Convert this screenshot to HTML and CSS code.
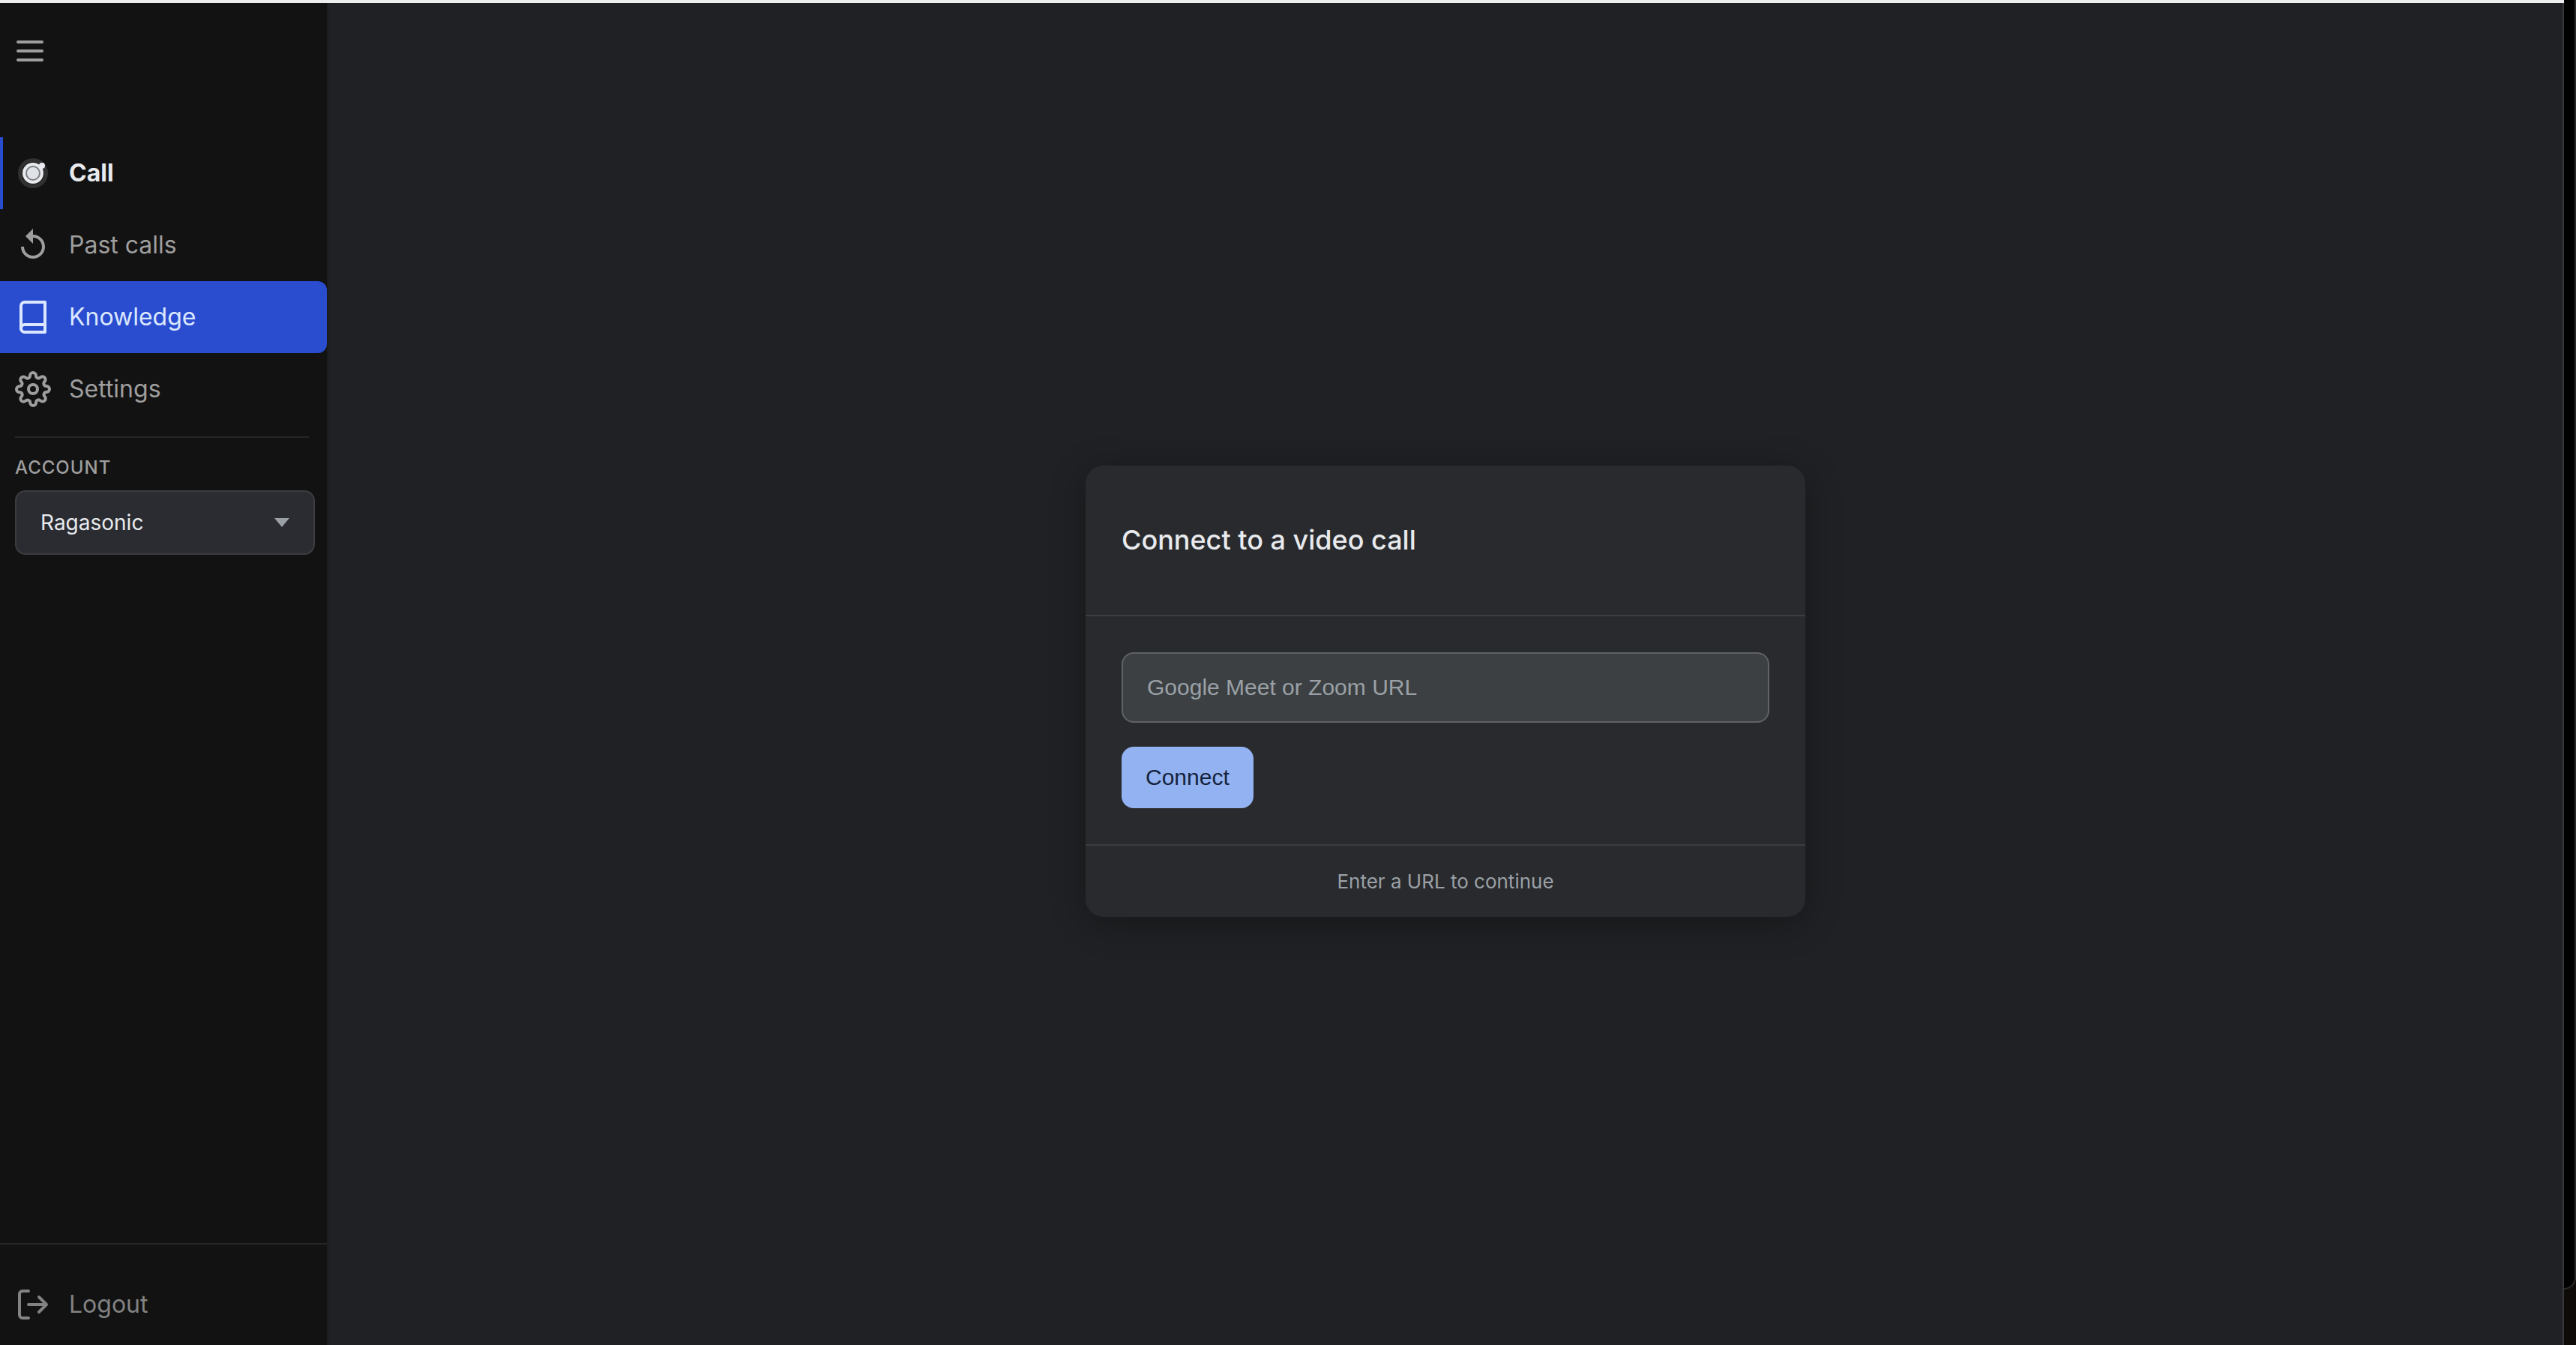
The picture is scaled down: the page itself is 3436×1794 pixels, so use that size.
FILE: index.html
```html
<!DOCTYPE html>
<html lang="en">
<head>
<meta charset="utf-8">
<title>Connect to a video call</title>
<link rel="stylesheet" href="styles.css">
</head>
<body>
<div class="app">
  <aside class="sidebar">
    <button class="menu-button" type="button" aria-label="Toggle menu">
      <svg class="icon" viewBox="0 0 24 24"><path d="M4 6h16M4 12h16M4 18h16"/></svg>
    </button>
    <nav class="nav">
      <a class="nav-item nav-item-current" href="#call">
        <svg class="icon-solid" viewBox="0 0 48 48">
          <circle cx="24" cy="24" r="20" fill="#313131"/>
          <circle cx="24" cy="24" r="15" fill="#1a1a1a"/>
          <circle cx="24" cy="24" r="14" fill="#e8eaed"/>
          <circle cx="36" cy="14" r="4" fill="#e8eaed"/>
          <circle cx="24" cy="24" r="9" fill="#dfe2e7" stroke="#7c7f84" stroke-width="2"/>
        </svg>
        Call
      </a>
      <a class="nav-item" href="#past-calls">
        <svg class="icon-solid" viewBox="0 0 24 24"><path fill="currentColor" d="M12 5V1L7 6l5 5V7c3.31 0 6 2.69 6 6s-2.69 6-6 6-6-2.69-6-6H4c0 4.42 3.58 8 8 8s8-3.58 8-8-3.58-8-8-8z"/></svg>
        Past calls
      </a>
      <a class="nav-item nav-item-active" href="#knowledge">
        <svg class="icon" viewBox="0 0 24 24"><path d="M4 19.5A2.5 2.5 0 0 1 6.5 17H20"/><path d="M6.5 2H20v20H6.5A2.5 2.5 0 0 1 4 19.5v-15A2.5 2.5 0 0 1 6.5 2z"/></svg>
        Knowledge
      </a>
      <a class="nav-item" href="#settings">
        <svg class="icon" viewBox="0 0 24 24"><circle cx="12" cy="12" r="3"/><path d="M19.4 15a1.65 1.65 0 0 0 .33 1.82l.06.06a2 2 0 0 1 0 2.83 2 2 0 0 1-2.83 0l-.06-.06a1.65 1.65 0 0 0-1.82-.33 1.65 1.65 0 0 0-1 1.51V21a2 2 0 0 1-2 2 2 2 0 0 1-2-2v-.09A1.65 1.65 0 0 0 9 19.4a1.65 1.65 0 0 0-1.82.33l-.06.06a2 2 0 0 1-2.83 0 2 2 0 0 1 0-2.83l.06-.06a1.65 1.65 0 0 0 .33-1.82 1.65 1.65 0 0 0-1.51-1H3a2 2 0 0 1-2-2 2 2 0 0 1 2-2h.09A1.65 1.65 0 0 0 4.6 9a1.65 1.65 0 0 0-.33-1.82l-.06-.06a2 2 0 0 1 0-2.83 2 2 0 0 1 2.83 0l.06.06a1.65 1.65 0 0 0 1.82.33H9a1.65 1.65 0 0 0 1-1.51V3a2 2 0 0 1 2-2 2 2 0 0 1 2 2v.09a1.65 1.65 0 0 0 1 1.51 1.65 1.65 0 0 0 1.82-.33l.06-.06a2 2 0 0 1 2.83 0 2 2 0 0 1 0 2.83l-.06.06a1.65 1.65 0 0 0-.33 1.82V9a1.65 1.65 0 0 0 1.51 1H21a2 2 0 0 1 2 2 2 2 0 0 1-2 2h-.09a1.65 1.65 0 0 0-1.51 1z"/></svg>
        Settings
      </a>
    </nav>
    <div class="account">
      <label class="account-label" for="account">ACCOUNT</label>
      <div class="select-wrap">
        <select class="account-select" id="account"><option>Ragasonic</option></select>
      </div>
    </div>
    <div class="sidebar-footer">
      <a class="nav-item nav-item-muted" href="#logout">
        <svg class="icon" viewBox="0 0 24 24"><path d="M9 21H5a2 2 0 0 1-2-2V5a2 2 0 0 1 2-2h4M16 17l5-5-5-5M21 12H9"/></svg>
        Logout
      </a>
    </div>
  </aside>
  <main class="main">
    <form class="card">
      <header class="card-header"><h1 class="card-title">Connect to a video call</h1></header>
      <div class="card-body">
        <input class="url-input" type="url" aria-label="Meeting URL" placeholder="Google Meet or Zoom URL">
        <button class="connect-button" type="button">Connect</button>
      </div>
      <footer class="card-footer">Enter a URL to continue</footer>
    </form>
  </main>
  <div class="window-edge"><div class="window-corner"></div></div>
</div>
</body>
</html>
```

FILE: styles.css
```css
* {
  box-sizing: border-box;
}

body {
  margin: 0;
  background: #202124;
  font-family: Inter, "Liberation Sans", sans-serif;
}

.app {
  display: flex;
  min-height: 100vh;
}

.sidebar {
  display: flex;
  flex-direction: column;
  flex: 0 0 438px;
  padding-right: 2px;
  border-top: 4px solid #ededed;
  background: #121212;
  box-shadow: inset -2px 0 #1b1c1e;
}

.icon,
.icon-solid {
  flex: none;
  width: 48px;
  height: 48px;
}

.icon {
  fill: none;
  stroke: currentColor;
  stroke-width: 2;
  stroke-linecap: round;
  stroke-linejoin: round;
}

.menu-button {
  display: flex;
  align-self: flex-start;
  margin: 40px 16px 91px;
  padding: 0;
  border: 0;
  background: none;
  color: #9e9e9e;
}

.nav-item {
  display: flex;
  align-items: center;
  gap: 24px;
  height: 96px;
  padding-left: 20px;
  color: #9e9e9e;
  font-size: 32px;
  line-height: 48px;
  text-decoration: none;
}

.nav-item-current {
  box-shadow: inset 4px 0 #2a4dd0;
  color: #e8eaed;
  font-weight: 700;
}

.nav-item-active {
  border-radius: 0 12px 12px 0;
  background: #2a4dd0;
  color: #dbe7ff;
}

.nav-item-muted {
  color: #828282;
}

.account {
  display: flex;
  flex-direction: column;
  margin: 15px 16px 0 20px;
}

.account::before {
  content: "";
  height: 2px;
  margin: 0 8px 24px 0;
  background: #262626;
}

.account-label {
  margin-bottom: 14px;
  color: #9e9e9e;
  font-size: 24px;
  font-weight: 500;
  line-height: 32px;
  letter-spacing: 1px;
}

.select-wrap {
  display: flex;
  align-items: center;
  height: 86px;
  padding-right: 32px;
  border: 2px solid #3c3d3f;
  border-radius: 14px;
  background: #2a2c31;
}

.select-wrap::after {
  content: "";
  border: 10px solid transparent;
  border-top: 12px solid #9aa0a6;
  border-bottom: 0;
}

.account-select {
  flex: 1;
  height: 100%;
  padding: 0 0 0 32px;
  border: 0;
  appearance: none;
  background: none;
  color: #e8eaed;
  font: 28px/40px Inter, "Liberation Sans", sans-serif;
}

.sidebar-footer {
  margin-top: auto;
  padding: 32px 0 6px;
  border-top: 2px solid #262626;
}

.main {
  display: flex;
  flex: 1;
  align-items: center;
  justify-content: center;
  padding: 46px 2px 0 0;
  border-top: 4px solid #ededed;
  box-shadow: inset -2px 0 #37383a;
}

.card {
  width: 960px;
  border-radius: 24px;
  background: #292a2d;
  box-shadow: 0 8px 48px rgba(0, 0, 0, 0.3);
}

.card-header {
  padding: 76px 48px;
  border-bottom: 2px solid #3c3d40;
}

.card-title {
  margin: 0;
  color: #e8eaed;
  font-size: 36px;
  font-weight: 500;
  line-height: 47px;
}

.card-body {
  display: flex;
  flex-direction: column;
  align-items: flex-start;
  gap: 32px;
  padding: 48px;
}

.url-input {
  width: 100%;
  height: 94px;
  padding: 0 32px;
  border: 2px solid #5f6266;
  border-radius: 16px;
  background: #3c4043;
  color: #e8eaed;
  font: 30px/40px "Liberation Sans", Arial, sans-serif;
}

.url-input::placeholder {
  color: #9aa0a6;
}

.connect-button {
  height: 82px;
  padding: 0 32px;
  border: 0;
  border-radius: 16px;
  background: #93b2f1;
  color: #14233c;
  font: 30px/40px "Liberation Sans", Arial, sans-serif;
}

.card-footer {
  padding: 32px 48px 31px;
  border-top: 2px solid #3c3d40;
  color: #9aa0a6;
  font-size: 26px;
  line-height: 32px;
  text-align: center;
}

.window-edge {
  flex: 0 0 16px;
  padding-bottom: 74px;
  background: #0d0a07;
}

.window-corner {
  height: 100%;
  border: solid #2b2a28;
  border-width: 0 2px 2px 0;
  border-radius: 0 0 16px 0;
  background: #000;
}
```
